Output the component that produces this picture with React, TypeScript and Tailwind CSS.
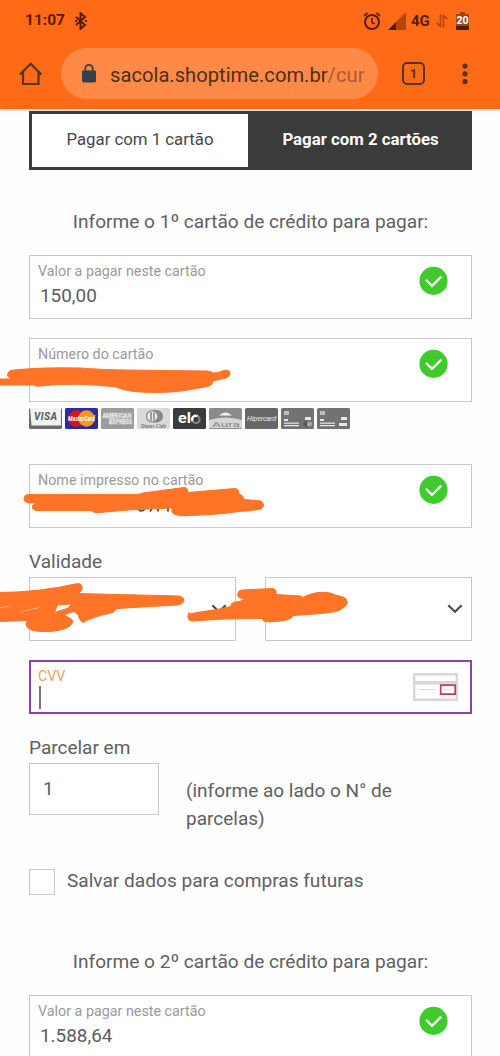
import type { ReactNode } from 'react';

type FieldProps = Readonly<{
    label: string;
    value?: string;
    className?: string;
}>;

const CheckBadge = () => (
    <svg viewBox="0 0 29 29" className="mt-[10px] mr-[23px] h-[29px] w-[29px] shrink-0">
        <circle cx="14.5" cy="14.9" r="14.1" fill="#3ecb2b" />
        <path d="M7 13.8l6 6 9.3-9.2" fill="none" stroke="#fff" strokeWidth="2.3" />
    </svg>
);

const Field = ({ label, value, className }: FieldProps) => (
    <div className={`flex h-[64px] justify-between border border-[#c8c8c8] bg-white ${className ?? ''}`}>
        <div className="pl-[8px] pt-[6px]">
            <div className="text-[14.3px] leading-[18px] text-[#9a9a9a]">{label}</div>
            <div className="pl-[2px] pt-[4px] text-[18.9px] leading-[24px] text-[#5c5c5c]">{value}</div>
        </div>
        <CheckBadge />
    </div>
);

const Select = () => (
    <div className="flex h-[64px] w-[207px] items-center justify-end border border-[#c8c8c8] bg-white pr-[8px]">
        <svg viewBox="0 0 16 10" className="h-[10px] w-4">
            <path d="M1.3 1.3L8 7.8l6.7-6.5" fill="none" stroke="#4d4d4d" strokeWidth="2.2" />
        </svg>
    </div>
);

const StatusBar = () => (
    <div className="flex h-[40px] items-center pl-[25px] pr-[31px] pt-[2px] text-[#5a1c00]">
        <span className="w-[41px] whitespace-nowrap text-[15.5px] font-bold leading-none">11:07</span>
        <svg viewBox="0 0 14 18" className="ml-[8px] h-[18px] w-[14px]" fill="none" stroke="currentColor" strokeWidth="2">
            <path d="M2 5l9 8-4.5 4V1L11 5l-9 8" />
            <path d="M1 9h2M11 9h2" />
        </svg>
        <svg viewBox="0 0 18 18" className="ml-auto h-[18px] w-[18px]" fill="none" stroke="currentColor" strokeWidth="2">
            <circle cx="9" cy="10" r="7" />
            <path d="M9 6v4.4l2.8 1.7M1 4l3.5-3M17 4l-3.5-3" strokeWidth="1.7" />
        </svg>
        <svg viewBox="0 0 18 18" className="ml-[7px] h-[18px] w-[18px]">
            <path d="M0 18L18 0v18z" fill="#b7440b" />
            <path d="M0 18l8-8v8z" fill="currentColor" />
        </svg>
        <span className="ml-[5px] w-[20px] whitespace-nowrap text-[15px] font-bold leading-none">4G</span>
        <svg viewBox="0 0 12 14" className="ml-[5px] h-[14px] w-3" fill="none" stroke="#b7440b" strokeWidth="1.7">
            <path d="M4.5 0v13M4.8 13L.8 8.8M7.5 14V1M7.2 1l4 4.2" />
        </svg>
        <span className="relative ml-[8px] flex h-[18px] w-[13px] items-center justify-center text-[10.5px] font-bold text-white">
            <svg viewBox="0 0 13 18" className="absolute inset-0">
                <path d="M4 0h5v2h4v16H0V2h4z" fill="#9d4514" />
                <path d="M0 14h13v4H0z" fill="#5a1c00" />
            </svg>
            <span className="relative">20</span>
        </span>
    </div>
);

const AddressBar = () => (
    <div className="flex h-[69px] items-start pt-[8px] text-[#54351f]">
        <svg viewBox="0 0 24 24" className="ml-[19px] mt-[14px] h-6 w-6" fill="none" stroke="currentColor" strokeWidth="2.2">
            <path d="M1 12.5L11.7 1.8l10.7 10.7M4 10v12h15.5V10" />
        </svg>
        <div className="ml-[18px] flex h-[51px] w-[317px] items-center rounded-full bg-[#ff8a48] pl-[20px]">
            <svg viewBox="0 0 16 19" className="mb-[1px] h-[19px] w-4">
                <rect x="1" y="6.5" width="14" height="12" rx="1.4" fill="#34404a" />
                <path d="M4.3 7V4.6a3.7 3.7 0 017.4 0V7" fill="none" stroke="#34404a" strokeWidth="1.8" />
            </svg>
            <span className="ml-[13px] mt-[2px] w-[256px] overflow-hidden whitespace-nowrap text-[20.2px] leading-[28px] text-[#4d2f18]">
                sacola.shoptime.com.br<span className="text-[#a85b35]">/cur</span>
            </span>
        </div>
        <span className="ml-[24px] mt-[14px] flex h-[23px] w-[23px] items-center justify-center rounded-[5px] border-[2.3px] border-current text-[13px] font-bold">
            1
        </span>
        <svg viewBox="0 0 6 22" className="ml-[37px] mt-[15px] h-[22px] w-[6px]" fill="currentColor">
            <circle cx="3" cy="3" r="2.6" />
            <circle cx="3" cy="10.8" r="2.6" />
            <circle cx="3" cy="18.6" r="2.6" />
        </svg>
    </div>
);

type BrandProps = Readonly<{ fill: string; children: ReactNode }>;

const Brand = ({ fill, children }: BrandProps) => (
    <svg viewBox="0 0 33 21" className="h-[21px] w-[33px] overflow-visible">
        <rect width="33" height="21" rx="1.5" fill={fill} />
        {children}
    </svg>
);

const Brands = () => (
    <div className="mt-[6px] flex gap-[3px]">
        <Brand fill="#6b6b6b">
            <path d="M1 0h31v17.5H2.5z" fill="#f1f1f1" />
            <text x="5" y="12" fontSize="10" fontWeight="700" fontStyle="italic" fill="#555" textLength="23">VISA</text>
        </Brand>
        <Brand fill="#2b2ba6">
            <circle cx="11.5" cy="10.5" r="8.2" fill="#d9141e" />
            <circle cx="21.5" cy="10.5" r="8.2" fill="#f59a1c" />
            <text x="3" y="13" fontSize="6.5" fontWeight="700" fontStyle="italic" fill="#fff" textLength="27" lengthAdjust="spacingAndGlyphs">MasterCard</text>
        </Brand>
        <Brand fill="#9b9b9b">
            <g fill="none" stroke="#e6e6e6" strokeWidth=".6" fontSize="7" fontWeight="700">
                <text x="1.5" y="9.5" textLength="29" lengthAdjust="spacingAndGlyphs">AMERICAN</text>
                <text x="8" y="16" textLength="23" lengthAdjust="spacingAndGlyphs">EXPRESS</text>
            </g>
        </Brand>
        <Brand fill="#dadada">
            <rect x="9" y="2" width="17" height="12.5" rx="6.25" fill="#898989" />
            <circle cx="15.2" cy="8.2" r="5" fill="#eee" />
            <path d="M14 4v8.5M17 4v8.5" stroke="#888" strokeWidth="1.6" />
            <text x="4" y="19.5" fontFamily="Liberation Serif" fontSize="6" fontWeight="700" fill="#777" textLength="25" lengthAdjust="spacingAndGlyphs">Diners Club</text>
        </Brand>
        <Brand fill="#3b3b3b">
            <text x="5" y="15" fontSize="14" fontWeight="700" fill="#fff" textLength="13" lengthAdjust="spacingAndGlyphs">el</text>
            <circle cx="23" cy="11.5" r="3.6" fill="none" stroke="#858585" strokeWidth="2.2" />
            <path d="M19.5 13a3.6 3.6 0 015-4.8" fill="none" stroke="#fff" strokeWidth="2.2" />
        </Brand>
        <Brand fill="#8b8b8b">
            <path d="M0 12Q16 7 33 12v8H0z" fill="#d5d5d5" />
            <path d="M10 7.5Q16.5 1.5 23 7.5z" fill="#f2f2f2" />
            <text x="3" y="18.5" fontSize="7.5" fill="#888" textLength="28" lengthAdjust="spacingAndGlyphs">Aura</text>
        </Brand>
        <Brand fill="#676767">
            <text x="2" y="13" fontSize="8" fontStyle="italic" fill="#eee" textLength="29" lengthAdjust="spacingAndGlyphs">Hipercard</text>
        </Brand>
        <Brand fill="#727272">
            <path d="M3 3h5v4H3z" fill="#bdbdbd" />
            <path d="M3 11h4v2H3zM3 14.5h15v1.2H3zM3 17h15v1.2H3zM24 9h6v3h-6z" fill="#e8e8e8" />
            <circle cx="25" cy="16" r="2.5" fill="#555" />
            <circle cx="28.5" cy="16" r="2.5" fill="#aaa" />
        </Brand>
        <Brand fill="#727272">
            <path d="M3 3h5v4H3z" fill="#bdbdbd" />
            <path d="M3 11h4v2H3zM3 14.5h15v1.2H3zM3 17h15v1.2H3zM24 9h6v3h-6zM22 15h8v3h-8z" fill="#e8e8e8" />
        </Brand>
    </div>
);

// Hand-drawn marks that hide the card number, holder name and expiry date.
const Scribbles = () => (
    <svg viewBox="0 0 500 1056" className="pointer-events-none absolute left-0 top-0 h-[1056px] w-[500px]">
        <path d="M138 509q3 4 7 0M150 511.500l2-3M158 511.500v-3M168 511.500v-4M42 503v2" stroke="#444" strokeWidth="1.700" fill="none" />
        <g fill="#ff7426" stroke="#ff7426" strokeWidth="1" strokeLinejoin="round">
            <path d="M0 379h11q-5-3-3-6 1-3 6-3 30-3 66-2 25 2 47 2l79 1q5 0 7 2 6 0 9-2 7-2 8 1 1 4-4 6l-13 3q0 5-8 6l-23 4q-28 3-52 0-10-2-14-4-40-5-76-1-4 1-6-1H0z" />
            <path d="M28 494.500h107q4 0 8-1.500l41-5.500q4 0 4 5l47-4q4 0 4 6 4 0 5 5l17 1.500q5 4 0 8-10 2-22 2.500-20 3-48 4-12 1-17-1.500-4-3-1-6l-12 .5q-20 0-61 4h-5q-3-1-4-2H36q-4-1-4-4 1-3 7-3.500H28q-4-1-4-4.500t4-4z" />
            <path
                fillRule="evenodd"
                d="M-2 592.500q40 0 80-9 5 1 4 5 0 3-4 5l101 2.500q5 1 5 4 0 4-7 5l-60 3.500-4 4q-20 4-30 10-4-2-5-8-3-2-4-3-6 1-10 4 9 3 9 6.500-3 8-23 9.500-23 1-24-7 0-3 2-4l-30 1zM0 606.500v2l20-3.500zM17 613.500l21-5 6-3-20 5zM54.500 612.500l3-7.500 14-1-3 4z"
            />
            <path d="M189 614l11-2 17-2.500 14-3q-1-5 9-5l5-3q-9 0-7-5 0-3 4-3.500l31-1.500q4 1 3 6l25 1.500 2 1.500q4-3 15-5 12-1 17 2.500 12 2 12 6 2 4-8 9.500-8 3-46 5-1 5-18 6-10 1-12-1v-2l-38 .5-34 2q-5-2-2-8.500z" />
        </g>
    </svg>
);

const App = () => {
    return (
        <div className="relative h-[1056px] w-[500px] overflow-hidden bg-[#fefefe] font-[Roboto,sans-serif] text-[#606060]">
            <header className="h-[109px] bg-[#ff6a16] shadow-[0_1px_3px_rgba(0,0,0,0.25)]">
                <StatusBar />
                <AddressBar />
            </header>

            <main className="ml-[29px] w-[443px] pt-[2px]">
                <div className="flex h-[59px] border-[3px] border-[#3b3b3b] bg-[#3b3b3b] text-[16.8px] leading-[51px]">
                    <div className="w-[216px] bg-white text-center text-[#484848]">Pagar com 1 cartão</div>
                    <div className="flex-1 pl-[4px] text-center font-bold text-white">Pagar com 2 cartões</div>
                </div>

                <h2 className="mt-[38px] text-center text-[19.1px] leading-[28px]">Informe o 1º cartão de crédito para pagar:</h2>
                <Field label="Valor a pagar neste cartão" value="150,00" className="mt-[19px]" />
                <Field label="Número do cartão" className="mt-[19px]" />
                <Brands />
                <Field label="Nome impresso no cartão" className="mt-[35px]" />

                <div className="mt-[23px] text-[19px] leading-[22px]">Validade</div>
                <div className="mt-[4px] flex justify-between">
                    <Select />
                    <Select />
                </div>

                <div className="mt-[19px] flex h-[54px] items-center justify-between border-2 border-[#8743b5] bg-white pl-[7px] pr-[12px]">
                    <div className="h-full pt-[5px]">
                        <div className="text-[14.2px] leading-[18px] text-[#eba168]">CVV</div>
                        <div className="ml-[1px] mt-[1px] h-[23px] w-[1.5px] bg-[#777]" />
                    </div>
                    <svg viewBox="0 0 45 28" className="h-[28px] w-[45px]">
                        <path d="M1.2 1.2h42.6v25.6H1.2z" fill="none" stroke="#d7d7d7" strokeWidth="2.4" />
                        <path d="M1 9.8h43" stroke="#d7d7d7" strokeWidth="3.6" />
                        <path d="M5 16.5h18" stroke="#ddd" />
                        <path d="M27.7 12.2h14.5v9H27.7z" fill="#fff" stroke="#cf3558" strokeWidth="1.7" />
                        <path d="M31 16.5h7" stroke="#ddd" />
                    </svg>
                </div>

                <div className="mt-[23px] text-[19px] leading-[22px]">Parcelar em</div>
                <div className="mt-[4px] flex">
                    <div className="h-[52px] w-[130px] border border-[#c8c8c8] bg-white pl-[13px] text-[19px] leading-[49px]">1</div>
                    <p className="ml-[27px] mt-[14px] w-[240px] text-[19px] leading-[28px]">
                        (informe ao lado o N° de parcelas)
                    </p>
                </div>

                <div className="mt-[36px] flex h-[26px] items-center">
                    <span className="h-[26px] w-[26px] border border-[#c8c8c8] bg-white" />
                    <span className="-mt-[2px] ml-[12px] text-[19.1px] leading-[24px]">Salvar dados para compras futuras</span>
                </div>

                <h2 className="mt-[53px] text-center text-[19.1px] leading-[28px]">Informe o 2º cartão de crédito para pagar:</h2>
                <Field label="Valor a pagar neste cartão" value="1.588,64" className="mt-[19px]" />
            </main>

            <Scribbles />
        </div>
    );
};

export default App;
